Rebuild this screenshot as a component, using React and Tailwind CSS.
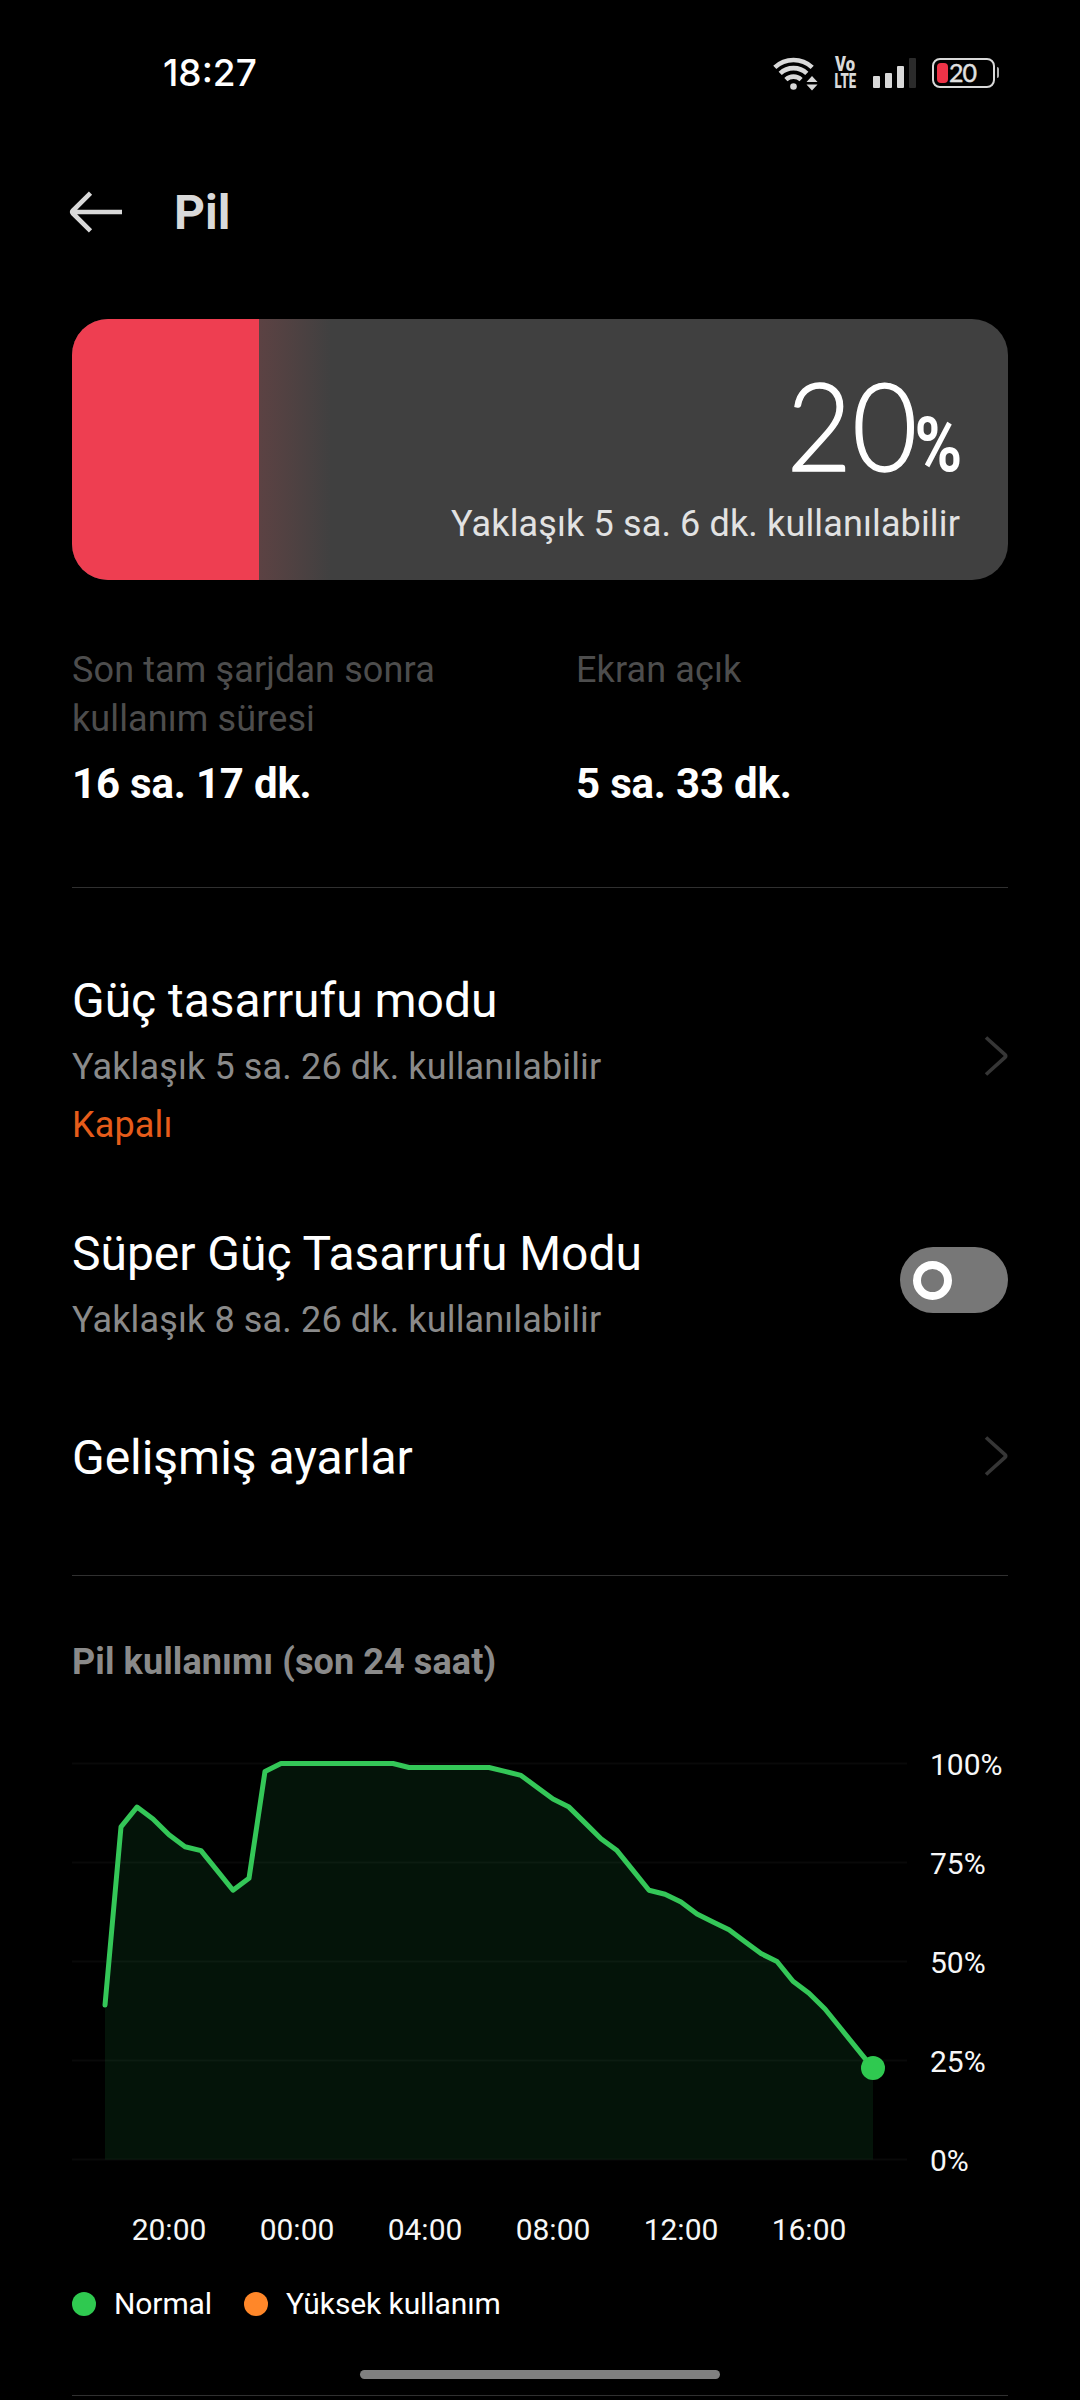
import React from "react";

const LEVELS = [
  39, 84, 89, 86, 82, 79, 78, 73, 68, 71, 98, 100, 100, 100, 100, 100, 100, 100, 100,
  99, 99, 99, 99, 99, 99, 98, 97, 94, 91, 89, 85, 81, 78, 73, 68, 67, 65, 62, 60, 58,
  55, 52, 50, 45, 42, 38, 33, 28, 23,
];
const HOURS = ["20:00", "00:00", "04:00", "08:00", "12:00", "16:00"];
const PERCENTS = ["100%", "75%", "50%", "25%", "0%"];

function StatusBar() {
  return (
    <div className="flex h-36 items-center pl-[163px] pr-[81px] pt-px">
      <span className="font-['Inter'] text-[37px] font-medium leading-none tracking-[0px] text-white">18:27</span>
      <div className="ml-auto flex items-center">
        <svg className="h-[36px] w-[46px]" viewBox="0 0 46 36" fill="none">
          <g stroke="#d9d9d9" strokeWidth="4.6">
            <path d="M1.8 12.4a27.5 27.5 0 0 1 37.4 0" />
            <path d="M7.2 18.4a19.4 19.4 0 0 1 26.6 0" />
            <path d="M12.9 24.6a11.2 11.2 0 0 1 15.2 0" />
          </g>
          <circle cx="20.5" cy="31.5" r="3.3" fill="#d9d9d9" />
          <path d="m39 21 5.5 6h-11zM39 35.500l-5.500-6h11z" fill="#d9d9d9" />
        </svg>
        <div className="ml-[15px] flex h-[31px] w-[22px] flex-col items-center justify-between font-['Roboto'] text-[20px] font-black leading-[14px] text-[#d9d9d9]">
          <span className="origin-center scale-x-[0.83]">Vo</span>
          <span className="origin-center scale-x-[0.66]">LTE</span>
        </div>
        <div className="ml-[17px] flex h-[30px] items-end gap-[5px]">
          <i className="h-3 w-[7px] rounded-[1px] bg-[#d9d9d9]" />
          <i className="h-[15px] w-[7px] rounded-[1px] bg-[#d9d9d9]" />
          <i className="h-[22px] w-[7px] rounded-[1px] bg-[#d9d9d9]" />
          <i className="h-[30px] w-[7px] rounded-[1px] bg-[#2b2b2b]" />
        </div>
        <div className="ml-4 flex h-[30px] w-[63px] items-center rounded-[8px] border-2 border-[#d9d9d9] pl-[3px]">
          <i className="h-5 w-[11px] rounded-[4px] bg-[#ee3347]" />
          <span className="ml-px font-['Lato'] text-[25px] leading-none tracking-[-0.9px] text-[#e0e0e0] [-webkit-text-stroke:0.4px_#e0e0e0]">20</span>
        </div>
        <i className="ml-[2px] h-[11px] w-[2px] rounded-r bg-[#b0b0b0]" />
      </div>
    </div>
  );
}

function Chevron({ className }) {
  return (
    <svg className={"h-10 w-6 " + className} viewBox="0 0 24 40" fill="none">
      <path d="M2 1.500 21 18.600q1.500 1.400 0 2.800L2 38.500" stroke="#363636" strokeWidth="3.600" />
    </svg>
  );
}

function Row({ title, children, action, className }) {
  return (
    <div className={"flex items-center justify-between " + className}>
      <div>
        <div className="text-[48px] leading-[60px] tracking-[-0.03px] text-white">{title}</div>
        {children}
      </div>
      {action}
    </div>
  );
}

function Stat({ label, value, className }) {
  return (
    <div className={className}>
      <div className="h-[98px] text-[36px] leading-[49px] tracking-[0.12px] text-[#4d4d4d]">{label}</div>
      <div className="mt-[12px] text-[42px] font-bold leading-[56px] tracking-[-0.2px] text-white">{value}</div>
    </div>
  );
}

function Chart() {
  const points = LEVELS.map((v, i) => `${33 + i * 16},${(444.5 - v * 3.96).toFixed(1)}`).join(" ");
  return (
    <div className="mt-[29px] flex">
      <svg className="h-[495px] w-[858px]" viewBox="0 0 858 495" fill="none">
        <polygon points={`33,444.5 ${points} 801,444.5`} fill="#041409" />
        {[48.5, 147.5, 246.5, 345.5, 444.5].map((y) => (
          <path key={y} d={`M0 ${y}H835`} stroke="#ffffff" strokeOpacity="0.035" strokeWidth="2" />
        ))}
        <polyline points={points} stroke="#34c758" strokeWidth="5" strokeLinejoin="round" strokeLinecap="round" />
        <circle cx="801" cy="353" r="12" fill="#2fc950" />
      </svg>
      <div className="text-[30px] text-[#f7f7f7]">
        {PERCENTS.map((p) => (
          <div key={p} className="h-[99px] leading-[99px]">{p}</div>
        ))}
      </div>
    </div>
  );
}

export default function App() {
  return (
    <div className="h-[2400px] w-[1080px] overflow-hidden bg-black font-['Roboto',sans-serif]">
      <StatusBar />
      <div className="flex h-[136px] items-center pl-[69px]">
        <svg className="h-[42px] w-[54px]" viewBox="0 0 54 42" fill="none">
          <path d="M53 21H5M21.500 2.200 4 19.500q-1.500 1.500 0 3L21.500 39.800" stroke="#d9d9d9" strokeWidth="4.600" />
        </svg>
        <h1 className="ml-[51px] pt-px text-[48px] font-bold leading-none text-[#d9d9d9]">Pil</h1>
      </div>
      <main className="px-[72px]">
        <section className="mt-[39px] flex h-[261px] overflow-hidden rounded-[36px] bg-[#404040]">
          <div className="w-[187px] bg-[#ee3e51]" />
          <div className="w-[72px] bg-gradient-to-r from-[#5c4243] to-[#404040]" />
          <div className="flex flex-1 flex-col items-end pr-12 pt-[45px]">
            <div className="flex items-baseline leading-[120px] text-white">
              <span className="origin-right scale-x-[0.925] font-['Lato'] text-[122px] font-light leading-[120px] [-webkit-text-stroke:1.4px_white]">20</span>
              <span className="-ml-3 -mr-[2px] origin-right scale-x-[0.85] text-[76px] font-bold leading-none">%</span>
            </div>
            <div className="mt-4 whitespace-nowrap text-[36px] leading-[48px] tracking-[0.14px] text-[#e2e2e2]">Yaklaşık 5 sa. 6 dk. kullanılabilir</div>
          </div>
        </section>

        <section className="mt-[66px] flex">
          <Stat className="w-[504px]" label={<>Son tam şarjdan sonra<br />kullanım süresi</>} value="16 sa. 17 dk." />
          <Stat label="Ekran açık" value="5 sa. 33 dk." />
        </section>

        <div className="mt-[75px] h-px bg-[#303030]" />

        <Row className="mt-[83px]" title="Güç tasarrufu modu" action={<Chevron className="mb-2" />}>
          <div className="mt-3 text-[36px] leading-[48px] tracking-[0.14px] text-[#8a8a8a]">Yaklaşık 5 sa. 26 dk. kullanılabilir</div>
          <div className="mt-[10px] text-[36px] leading-[48px] tracking-[0.14px] text-[#e65c1a]">Kapalı</div>
        </Row>
        <Row
          className="mt-[75px]"
          title="Süper Güç Tasarrufu Modu"
          action={
            <div className="mb-2 flex h-[66px] w-[108px] items-center rounded-full bg-[#777777] pl-[13px]">
              <i className="size-[39px] rounded-full border-8 border-white" />
            </div>
          }
        >
          <div className="mt-3 text-[36px] leading-[48px] tracking-[0.14px] text-[#8a8a8a]">Yaklaşık 8 sa. 26 dk. kullanılabilir</div>
        </Row>
        <Row className="mt-[84px]" title="Gelişmiş ayarlar" action={<Chevron className="mb-1" />} />

        <div className="mt-[87px] h-px bg-[#303030]" />

        <h2 className="mt-[62px] text-[36px] font-bold leading-[48px] tracking-[0.1px] text-[#8a8a8a]">Pil kullanımı (son 24 saat)</h2>
        <Chart />
        <div className="flex pl-[33px] text-[30px] leading-[40px] text-[#f7f7f7]">
          {HOURS.map((h) => (
            <div key={h} className="w-32 text-center">{h}</div>
          ))}
        </div>
        <div className="mt-[34px] flex h-10 items-center text-[30px] leading-[40px] text-white">
          <i className="size-6 rounded-full bg-[#2fc950]" />
          <span className="ml-[18px] tracking-[-0.1px]">Normal</span>
          <i className="ml-[32px] size-6 rounded-full bg-[#ff8729]" />
          <span className="ml-[18px] tracking-[-0.1px]">Yüksek kullanım</span>
        </div>
        <div className="mx-auto mt-[46px] h-[9px] w-[360px] rounded-full bg-[#808080]" />
        <div className="mt-4 h-px bg-[#303030]" />
      </main>
    </div>
  );
}
